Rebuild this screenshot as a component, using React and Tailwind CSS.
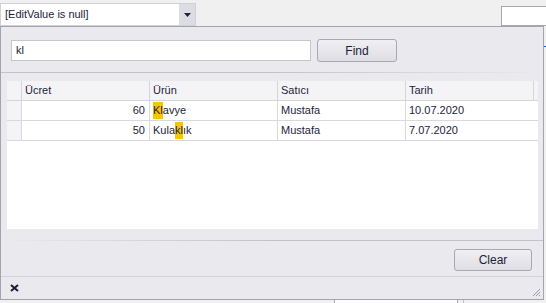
import React from 'react';

const rows = [
  { price: 60, product: [['Kl', true], ['avye', false]], seller: 'Mustafa', date: '10.07.2020' },
  { price: 50, product: [['Kula', false], ['kl', true], ['ık', false]], seller: 'Mustafa', date: '7.07.2020' },
];

function Hl({ parts }) {
  return parts.map(([t, on], i) =>
    on ? (
      <span key={i} className="bg-[#f7c600]">{t}</span>
    ) : (
      <span key={i}>{t}</span>
    )
  );
}

export default function App() {
  return (
    <div className="relative w-[546px] h-[303px] overflow-hidden bg-[#f0f0f0] text-[11px] text-[#1d1d3a] font-['Liberation_Sans',Arial,sans-serif]">
      {/* underlying form */}
      <div className="flex items-start">
        <div className="mt-[3px] flex h-[23px] w-[196px] border border-[#d0d0d8] bg-white">
          <div className="flex flex-1 items-center pl-[4px] pb-[1px]">[EditValue is null]</div>
          <div className="flex w-[16px] items-center justify-center bg-[#dcdce3]">
            <svg width="7" height="4" viewBox="0 0 7 4">
              <path d="M0 0h7L3.5 4z" fill="#23233a" />
            </svg>
          </div>
        </div>
        <div className="ml-auto mt-[6px] h-[20px] w-[45px] border border-r-0 border-[#a6a6b0] bg-white" />
      </div>
      <div className="absolute left-[334px] top-[299px] flex h-[10px] w-[124px] border-x border-[#a6a6b0] bg-white pl-[20px] text-[#1a3a9a]">
        Bugün
      </div>
      <div className="absolute left-[463px] top-[299px] h-[10px] w-px bg-[#c0c0c8]" />
      <div className="absolute left-[543px] top-[36px] h-[11px] w-[3px] border-b border-[#2a50c8]" />

      {/* popup */}
      <div className="absolute left-0 top-[26px] flex h-[274px] w-[544px] flex-col border border-[#a4a4ae] bg-[#e9e9ee]">
        <div className="flex items-center pl-[10px] pt-[12px]">
          <div className="flex h-[21px] w-[300px] items-center border border-[#c4c4cc] bg-white pl-[4px] pb-[1px]">kl</div>
          <button className="ml-[6px] h-[23px] w-[80px] rounded-[3px] border border-[#a8a8b2] bg-gradient-to-b from-[#f0f0f3] to-[#dedee4] text-[12px] text-[#1d1d3a]">
            Find
          </button>
        </div>
        <div className="mt-[10px] h-px bg-gradient-to-r from-[#c2c2c9] via-[#c2c2c9] to-[#e9e9ee]" />
        <div className="ml-[6px] mt-[8px] flex h-[148px] w-[531px] flex-col bg-white">
          <div className="flex h-[20px] bg-[#f4f4f7] border-b border-[#d4d4da]">
            <div className="w-[15px] border-r border-[#d4d4da]" />
            {['Ücret', 'Ürün', 'Satıcı', 'Tarih'].map((h) => (
              <div key={h} className="flex w-[128px] items-center border-r border-[#d4d4da] pl-[3px]">
                {h}
              </div>
            ))}
          </div>
          {rows.map((r, i) => (
            <div key={i} className="flex h-[20px] border-b border-[#d8d8de]">
              <div className="w-[15px] border-r border-[#d8d8de] bg-[#f4f4f7]" />
              <div className="flex w-[128px] items-center justify-end border-r border-[#d8d8de] pr-[4px]">{r.price}</div>
              <div className="flex w-[128px] items-center border-r border-[#d8d8de] pl-[3px]">
                <Hl parts={r.product} />
              </div>
              <div className="flex w-[128px] items-center border-r border-[#d8d8de] pl-[3px]">{r.seller}</div>
              <div className="flex w-[128px] items-center pl-[3px]">{r.date}</div>
            </div>
          ))}
        </div>
        <div className="mt-[11px] h-px bg-gradient-to-r from-[#e9e9ee] via-[#c2c2c9] to-[#c2c2c9]" />
        <div className="flex justify-end pr-[11px] pt-[8px]">
          <button className="h-[22px] w-[78px] rounded-[3px] border border-[#a8a8b2] bg-gradient-to-b from-[#f0f0f3] to-[#dedee4] text-[12px] text-[#1d1d3a]">
            Clear
          </button>
        </div>
        <div className="mt-[5px] h-px bg-[#d2d2d8]" />
        <div className="relative flex flex-1 items-center pl-[9px]">
          <svg width="9" height="8" viewBox="0 0 9 8">
            <path d="M1 1l7 6M8 1l-7 6" stroke="#1d1d3a" strokeWidth="2" />
          </svg>
          <svg className="absolute bottom-[2px] right-[2px]" width="10" height="10" viewBox="0 0 10 10">
            <path d="M9 2L2 9M9 5L5 9M9 8L8 9" stroke="#9a9aa4" strokeWidth="1" />
          </svg>
        </div>
      </div>
    </div>
  );
}
